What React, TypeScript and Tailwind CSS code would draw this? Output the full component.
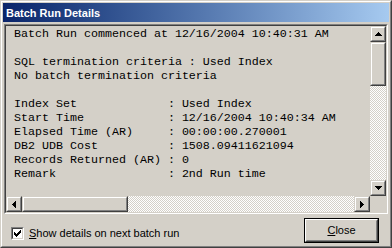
const lines = [
  "Batch Run commenced at 12/16/2004 10:40:31 AM",
  "",
  "SQL termination criteria : Used Index",
  "No batch termination criteria",
  "",
  "Index Set".padEnd(22) + ": Used Index",
  "Start Time".padEnd(22) + ": 12/16/2004 10:40:34 AM",
  "Elapsed Time (AR)".padEnd(22) + ": 00:00:00.270001",
  "DB2 UDB Cost".padEnd(22) + ": 1508.09411621094",
  "Records Returned (AR)".padEnd(22) + ": 0",
  "Remark".padEnd(22) + ": 2nd Run time",
];

const Raised = ({ className = "", children }: { className?: string; children?: React.ReactNode }) => (
  <div className={"border border-t-[#d4d0c8] border-l-[#d4d0c8] border-b-[#404040] border-r-[#404040] bg-[#d4d0c8] " + className}>
    <div className="w-full h-full border border-t-white border-l-white border-b-[#808080] border-r-[#808080] flex items-center justify-center">
      {children}
    </div>
  </div>
);

const Arrow = ({ dir }: { dir: "up" | "down" | "left" | "right" }) => {
  const pts = {
    up: "3.5,0 7,4 0,4",
    down: "0,0 7,0 3.5,4",
    left: "4,0 4,7 0,3.5",
    right: "0,0 4,3.5 0,7",
  }[dir];
  const vertical = dir === "up" || dir === "down";
  return (
    <svg width={vertical ? 7 : 4} height={vertical ? 4 : 7} viewBox={vertical ? "0 0 7 4" : "0 0 4 7"} shapeRendering="crispEdges">
      <polygon points={pts} fill="#000" />
    </svg>
  );
};

const track = "bg-[image:repeating-conic-gradient(#ffffff_0%_25%,#d4d0c8_0%_50%)] bg-[length:2px_2px]";

const App = () => {
  return (
    <div className="w-[392px] h-[248px] border border-t-[#d4d0c8] border-l-[#d4d0c8] border-b-[#404040] border-r-[#404040] bg-[#d4d0c8]">
      <div className="w-full h-full border border-t-white border-l-white border-b-[#808080] border-r-[#808080] p-[1px] flex flex-col">
        <div className="h-[19px] shrink-0 bg-linear-to-r from-[#0a246a] to-[#a6caf0] flex items-center pl-[3px] pt-[1px] text-white font-bold text-[11px] font-['Liberation_Sans',Arial,sans-serif]">
          Batch Run Details
        </div>

        <div className="mt-[2px] mx-[1px] h-[190px] shrink-0 border border-t-[#808080] border-l-[#808080] border-b-white border-r-white">
          <div className="w-full h-full border border-t-[#404040] border-l-[#404040] border-b-[#d4d0c8] border-r-[#d4d0c8] grid grid-cols-[1fr_16px] grid-rows-[1fr_16px]">
            <div className="overflow-hidden pl-[8px] pt-[1px] whitespace-pre text-black leading-[14px] text-[11.67px] font-['Liberation_Mono','Courier_New',monospace]">
              {lines.map((l, i) => (
                <div key={i} className="h-[14px]">{l}</div>
              ))}
            </div>
            <div className="flex flex-col">
              <Raised className="w-[16px] h-[16px]"><Arrow dir="up" /></Raised>
              <Raised className="w-[16px] h-[44px]" />
              <div className={"flex-1 " + track} />
              <Raised className="w-[16px] h-[16px]"><Arrow dir="down" /></Raised>
            </div>
            <div className="flex">
              <Raised className="w-[16px] h-[16px]"><Arrow dir="left" /></Raised>
              <Raised className="w-[106px] h-[16px]" />
              <div className={"flex-1 " + track} />
              <Raised className="w-[16px] h-[16px]"><Arrow dir="right" /></Raised>
            </div>
            <div className="bg-[#d4d0c8]" />
          </div>
        </div>

        <div className="flex-1 flex justify-between items-start font-['Liberation_Sans',Arial,sans-serif] text-[11px] text-black">
          <label className="mt-[11px] ml-[8px] flex items-center gap-[5px]">
            <span className="w-[13px] h-[13px] border border-t-[#808080] border-l-[#808080] border-b-white border-r-white">
              <span className="w-full h-full border border-t-[#404040] border-l-[#404040] border-b-[#d4d0c8] border-r-[#d4d0c8] bg-white flex items-center justify-center">
                <svg width="7" height="7" viewBox="0 0 7 7" shapeRendering="crispEdges">
                  <path d="M0 2h1v1h1v1h1V3h1V2h1V1h1V0h1v3H6v1H5v1H4v1H3v1H2V6H1V5H0z" fill="#000" />
                </svg>
              </span>
            </span>
            <span><span className="underline">S</span>how details on next batch run</span>
          </label>
          <div className="mt-[4px] mr-[10px] w-[75px] h-[25px] border border-black">
            <div className="w-full h-full border border-t-white border-l-white border-b-[#404040] border-r-[#404040]">
              <div className="w-full h-full border border-t-[#d4d0c8] border-l-[#d4d0c8] border-b-[#808080] border-r-[#808080] flex items-center justify-center">
                <span><span className="underline">C</span>lose</span>
              </div>
            </div>
          </div>
        </div>
      </div>
    </div>
  );
};

export default App;
